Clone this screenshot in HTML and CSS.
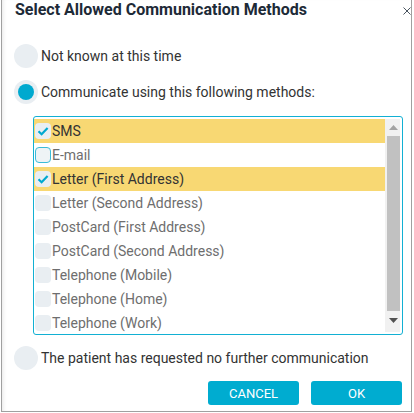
FILE: index.html
```html
<!DOCTYPE html>
<html>
<head>
<meta charset="utf-8">
<link rel="stylesheet" href="styles.css">
</head>
<body>
<div class="dialog">
  <div class="header">
    <div class="title">Select Allowed Communication Methods</div>
    <svg class="close" width="8" height="8" viewBox="0 0 8 8"><path d="M0.5 0.5 L7.5 7.5 M7.5 0.5 L0.5 7.5" stroke="#4a5560" stroke-width="1" fill="none"/></svg>
  </div>
  <div class="body">
    <div class="radio-row first"><span class="radio"></span><span class="rlabel">Not known at this time</span></div>
    <div class="radio-row"><span class="radio on"><span class="dot"></span></span><span class="rlabel">Communicate using this following methods:</span></div>
    <div class="listbox">
      <div class="items">
        <div class="item sel"><span class="cb"><svg width="16" height="16" viewBox="0 0 16 16"><path d="M3.5 8.2 L6.6 11.2 L12.6 5" stroke="#00a9cf" stroke-width="2.2" fill="none"/></svg></span><span>SMS</span></div>
        <div class="item"><span class="cb focus"></span><span>E-mail</span></div>
        <div class="item sel"><span class="cb"><svg width="16" height="16" viewBox="0 0 16 16"><path d="M3.5 8.2 L6.6 11.2 L12.6 5" stroke="#00a9cf" stroke-width="2.2" fill="none"/></svg></span><span>Letter (First Address)</span></div>
        <div class="item"><span class="cb"></span><span>Letter (Second Address)</span></div>
        <div class="item"><span class="cb"></span><span>PostCard (First Address)</span></div>
        <div class="item"><span class="cb"></span><span>PostCard (Second Address)</span></div>
        <div class="item"><span class="cb"></span><span>Telephone (Mobile)</span></div>
        <div class="item"><span class="cb"></span><span>Telephone (Home)</span></div>
        <div class="item"><span class="cb"></span><span>Telephone (Work)</span></div>
      </div>
      <div class="scrollbar">
        <div class="arrow up"><svg width="9" height="5" viewBox="0 0 9 5"><path d="M0 5 L4.5 0 L9 5 Z" fill="#a3a3a3"/></svg></div>
        <div class="thumb"></div>
        <div class="arrow down"><svg width="9" height="5" viewBox="0 0 9 5"><path d="M0 0 L4.5 5 L9 0 Z" fill="#505050"/></svg></div>
      </div>
    </div>
    <div class="radio-row last"><span class="radio"></span><span class="rlabel">The patient has requested no further communication</span></div>
    <div class="buttons">
      <button class="btn">CANCEL</button>
      <button class="btn">OK</button>
    </div>
  </div>
</div>
</body>
</html>
```
FILE: styles.css
```css
html, body {
  margin: 0;
  padding: 0;
  background: #ffffff;
}
body {
  font-family: Roboto, "Liberation Sans", sans-serif;
}
.dialog {
  margin-left: 1px;
  width: 409px;
  height: 411px;
  border: 1px solid #a0a0a0;
  border-top: none;
  box-shadow: inset 4px 0 4px -3px rgba(0,0,0,0.10);
  background: #ffffff;
}
.header {
  display: flex;
  justify-content: space-between;
  align-items: flex-start;
  height: 20px;
  padding-left: 13px;
}
.title {
  font-size: 16px;
  font-weight: 700;
  line-height: 20px;
  color: #1d2a37;
  margin-top: 0;
}
.close {
  margin-top: 7px;
  margin-right: 0;
}
.body {
  padding-left: 12px;
}
.radio-row {
  display: flex;
  align-items: center;
  height: 24px;
  margin-top: 12px;
}
.radio-row.first {
  margin-top: 24px;
}
.radio-row.last {
  margin-top: 11px;
}
.radio {
  width: 24px;
  height: 24px;
  border-radius: 50%;
  background: #e9eef2;
  display: flex;
  align-items: center;
  justify-content: center;
  flex: none;
}
.dot {
  width: 16px;
  height: 16px;
  border-radius: 50%;
  background: #00a9cf;
}
.rlabel {
  margin-left: 3px;
  font-size: 14px;
  color: #333333;
}
.listbox {
  margin-top: 12px;
  margin-left: 19px;
  width: 370px;
  height: 219px;
  box-sizing: border-box;
  border: 1px solid #12b0d3;
  border-radius: 3px;
  padding: 2px 2px 2px 0;
  display: flex;
  overflow: hidden;
}
.items {
  width: 351px;
  overflow: hidden;
}
.item {
  height: 24px;
  display: flex;
  align-items: center;
  font-size: 14px;
  color: #6e6e6e;
}
.item.sel {
  background: #f8d873;
  color: #333333;
}
.cb {
  width: 16px;
  height: 16px;
  box-sizing: border-box;
  border-radius: 4px;
  background: #e9eef2;
  margin-left: 1px;
  margin-right: 1px;
  flex: none;
  display: flex;
}
.cb.focus {
  border: 1.5px solid #3bbbd8;
  background: #eef3f6;
}
.scrollbar {
  width: 15px;
  background: #f1f1f1;
  display: flex;
  flex-direction: column;
}
.arrow {
  display: flex;
  justify-content: center;
  align-items: center;
  padding-left: 2px;
}
.arrow.up {
  height: 17px;
}
.arrow.down {
  height: 19px;
}
.thumb {
  height: 175px;
  margin-left: 2px;
  background: #c1c1c1;
}
.buttons {
  display: flex;
  justify-content: flex-end;
  gap: 12px;
  margin-top: 11px;
  padding-right: 9px;
}
.btn {
  width: 91px;
  height: 24px;
  border: none;
  border-radius: 3px;
  background: #00acd0;
  color: #ffffff;
  font-family: Roboto, "Liberation Sans", sans-serif;
  font-size: 13px;
  font-weight: 400;
  padding: 0;
}
```
